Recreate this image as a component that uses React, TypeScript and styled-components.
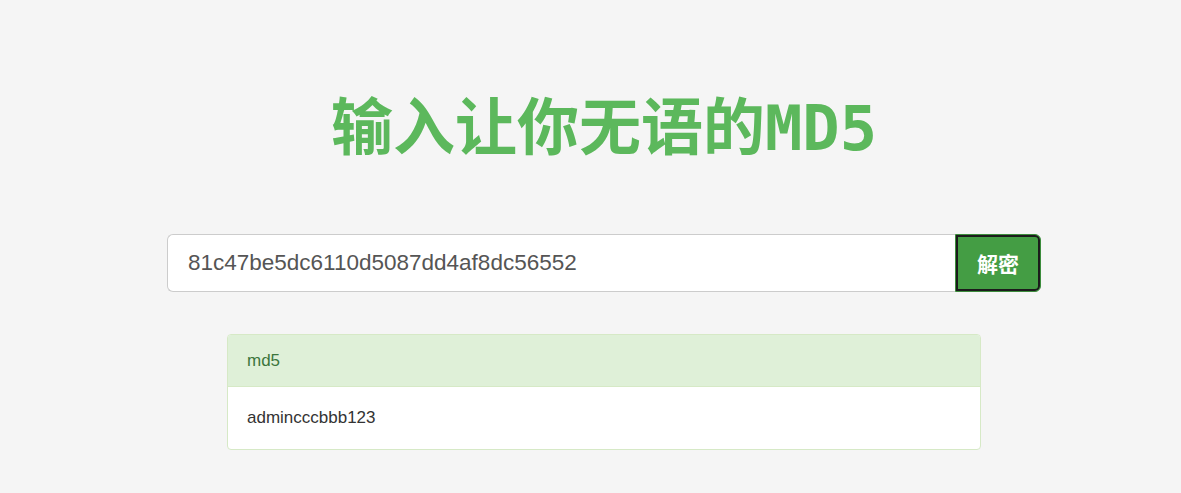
import React from "react";
import styled, { createGlobalStyle } from "styled-components";

const GlobalStyle = createGlobalStyle`
  html, body {
    margin:0;
    padding:0;
    background:#f5f5f5;
    font-family:"Liberation Sans", Arial, "Noto Sans CJK SC", sans-serif;
    color:#333;
  }
`;

const Page = styled.div`
  width:100%;
  min-height:493px;
  padding-top:88px;
  box-sizing:border-box;
`;

const Main = styled.div`
  width:874px;
  margin-left:167px;
`;

const Title = styled.h1`
  margin:0;
  text-align:center;
  font-family:"DejaVu Sans Mono", "Noto Sans CJK SC", monospace;
  font-size:62px;
  line-height:82px;
  font-weight:700;
  color:#5cb85c;
`;

const SearchForm = styled.form`
  display:flex;
  margin-top:64px;
  height:58px;
`;

const HashInput = styled.input`
  flex:1;
  min-width:0;
  height:58px;
  box-sizing:border-box;
  padding:0 20px;
  font-family:"Liberation Sans", Arial, sans-serif;
  font-size:22.5px;
  color:#555;
  background:#fff;
  border:1px solid #ccc;
  border-right:none;
  border-radius:6px 0 0 6px;
  outline:none;
`;

const DecryptButton = styled.button`
  width:86px;
  height:58px;
  box-sizing:border-box;
  border:1px solid #3c8c3c;
  border-radius:0 6px 6px 0;
  background:#449d44;
  box-shadow:inset 0 0 0 2px #1b1b1b;
  color:#fff;
  font-family:"Noto Sans CJK SC", sans-serif;
  font-size:21px;
  font-weight:700;
  cursor:pointer;
`;

const Panel = styled.div`
  width:752px;
  margin:42px auto 0;
  background:#fff;
  border:1px solid #d6e9c6;
  border-radius:4px;
  overflow:hidden;
`;

const PanelHeading = styled.div`
  height:51px;
  padding:0 19px;
  display:flex;
  align-items:center;
  background:#dff0d8;
  border-bottom:1px solid #d6e9c6;
  color:#3c763d;
  font-size:17px;
`;

const PanelBody = styled.div`
  height:62px;
  padding:0 19px;
  display:flex;
  align-items:center;
  font-size:17px;
  color:#333;
`;

export default function App() {
  return (
    <>
      <GlobalStyle />
      <Page>
        <Main>
          <Title>输入让你无语的MD5</Title>
          <SearchForm onSubmit={(e) => e.preventDefault()}>
            <HashInput defaultValue="81c47be5dc6110d5087dd4af8dc56552" />
            <DecryptButton type="submit">解密</DecryptButton>
          </SearchForm>
          <Panel>
            <PanelHeading>md5</PanelHeading>
            <PanelBody>admincccbbb123</PanelBody>
          </Panel>
        </Main>
      </Page>
    </>
  );
}
